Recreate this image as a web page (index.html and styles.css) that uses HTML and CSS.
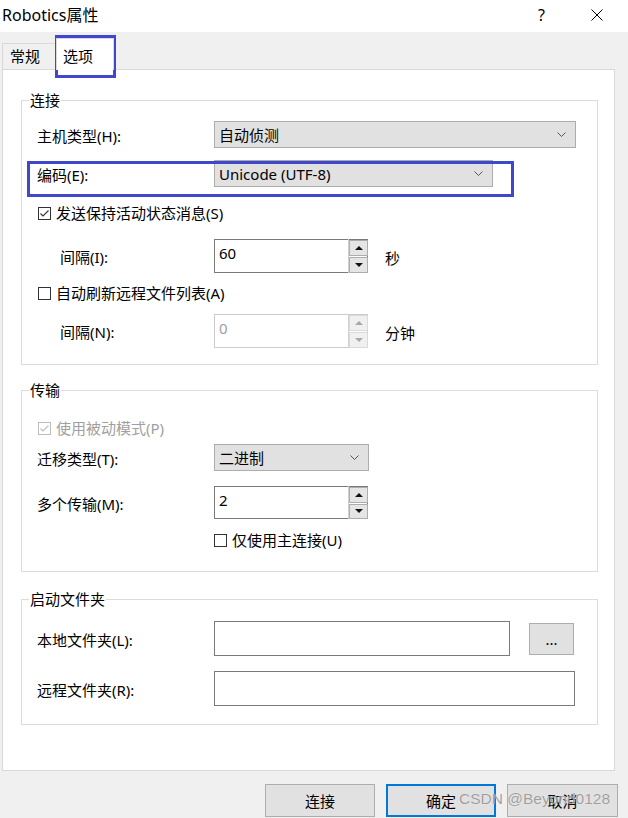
FILE: index.html
```html
<!DOCTYPE html>
<html lang="zh-CN">
<head>
<meta charset="utf-8">
<title>Robotics属性</title>
<link rel="stylesheet" href="styles.css">
</head>
<body>
<div class="window">
  <header class="titlebar">
    <span class="title">Robotics属性</span>
    <span class="help">?</span>
    <svg class="close" width="12" height="12" viewBox="0 0 12 12"><path d="M0.5 0.5L11.5 11.5M11.5 0.5L0.5 11.5" stroke="#000" stroke-width="1" fill="none"/></svg>
  </header>

  <nav class="tabs">
    <div class="tab">常规</div>
    <div class="tab active">选项</div>
  </nav>

  <main class="panel">
    <fieldset class="group group-conn">
      <legend>连接</legend>
      <div class="group-body">
        <div class="row row-combo m11">
          <span class="lbl">主机类型(H):</span>
          <div class="combo w-host"><span>自动侦测</span><svg class="chev" width="9" height="5" viewBox="0 0 9 5"><polyline points="0.5,0.5 4.5,4.5 8.5,0.5" fill="none" stroke="#555" stroke-width="1"/></svg></div>
        </div>
        <div class="row row-combo m12">
          <span class="lbl">编码(E):</span>
          <div class="combo w-enc"><span>Unicode (UTF-8)</span><svg class="chev" width="9" height="5" viewBox="0 0 9 5"><polyline points="0.5,0.5 4.5,4.5 8.5,0.5" fill="none" stroke="#555" stroke-width="1"/></svg></div>
        </div>
        <div class="row row-check m16">
          <span class="cb"><svg width="11" height="11" viewBox="0 0 11 11"><polyline points="1.5,5.5 4,8 9.5,2.5" fill="none" stroke="#333" stroke-width="1.1"/></svg></span>
          <span class="cb-text">发送保持活动状态消息(S)</span>
        </div>
        <div class="row row-spin m16">
          <span class="lbl sub">间隔(I):</span>
          <div class="spin">
            <span class="spin-val">60</span>
            <div class="spin-btns">
              <span class="sbtn"><i class="arr up"></i></span>
              <span class="sbtn"><i class="arr down"></i></span>
            </div>
          </div>
          <span class="unit">秒</span>
        </div>
        <div class="row row-check m10">
          <span class="cb"></span>
          <span class="cb-text">自动刷新远程文件列表(A)</span>
        </div>
        <div class="row row-spin m11">
          <span class="lbl sub">间隔(N):</span>
          <div class="spin disabled">
            <span class="spin-val">0</span>
            <div class="spin-btns">
              <span class="sbtn"><i class="arr up"></i></span>
              <span class="sbtn"><i class="arr down"></i></span>
            </div>
          </div>
          <span class="unit">分钟</span>
        </div>
      </div>
    </fieldset>

    <fieldset class="group group-trans">
      <legend>传输</legend>
      <div class="group-body">
        <div class="row row-check m18 disabled">
          <span class="cb"><svg width="11" height="11" viewBox="0 0 11 11"><polyline points="1.5,5.5 4,8 9.5,2.5" fill="none" stroke="#bdbdbd" stroke-width="1.1"/></svg></span>
          <span class="cb-text">使用被动模式(P)</span>
        </div>
        <div class="row row-combo m6">
          <span class="lbl">迁移类型(T):</span>
          <div class="combo w-type"><span>二进制</span><svg class="chev" width="9" height="5" viewBox="0 0 9 5"><polyline points="0.5,0.5 4.5,4.5 8.5,0.5" fill="none" stroke="#555" stroke-width="1"/></svg></div>
        </div>
        <div class="row row-spin short m15">
          <span class="lbl">多个传输(M):</span>
          <div class="spin">
            <span class="spin-val">2</span>
            <div class="spin-btns">
              <span class="sbtn"><i class="arr up"></i></span>
              <span class="sbtn"><i class="arr down"></i></span>
            </div>
          </div>
        </div>
        <div class="row row-check m11 indent">
          <span class="cb"></span>
          <span class="cb-text">仅使用主连接(U)</span>
        </div>
      </div>
    </fieldset>

    <fieldset class="group group-dirs">
      <legend>启动文件夹</legend>
      <div class="group-body">
        <div class="row row-input m12">
          <span class="lbl">本地文件夹(L):</span>
          <div class="textbox w-local"></div>
          <button class="browse">...</button>
        </div>
        <div class="row row-input m15">
          <span class="lbl">远程文件夹(R):</span>
          <div class="textbox w-remote"></div>
        </div>
      </div>
    </fieldset>
  </main>

  <footer class="buttons">
    <button class="btn">连接</button>
    <button class="btn default">确定</button>
    <button class="btn wide">取消</button>
  </footer>

  <div class="mark mark-tab"></div>
  <div class="mark mark-enc"></div>
  <span class="watermark">CSDN @Beyond0128</span>
</div>
</body>
</html>
```

FILE: styles.css
```css
* { box-sizing: border-box; }

html, body {
  margin: 0;
  padding: 0;
}

body {
  width: 628px;
  height: 818px;
  overflow: hidden;
  background: #f0f0f0;
  color: #000;
  font-family: "Noto Sans", "Noto Sans CJK SC", sans-serif;
  font-size: 15px;
  line-height: 20px;
}

.window {
  position: relative;
  width: 628px;
  height: 818px;
}

/* title bar */
.titlebar {
  height: 32px;
  background: #fff;
  display: flex;
  align-items: center;
}
.title {
  font-size: 16px;
  margin-left: 2px;
  margin-top: -3px;
}
.help {
  margin-left: auto;
  font-size: 16px;
  margin-right: 46px;
  margin-top: -3px;
}
.close {
  margin-right: 25px;
  margin-top: -3px;
}

/* tabs */
.tabs {
  height: 37px;
  display: flex;
  align-items: flex-end;
  padding-left: 2px;
}
.tab {
  height: 26px;
  width: 54px;
  border: 1px solid #d9d9d9;
  border-bottom: none;
  padding-left: 7px;
  line-height: 24px;
  background: #f0f0f0;
}
.tab.active {
  height: 32px;
  width: 58px;
  background: #fff;
  margin-bottom: -1px;
  position: relative;
  z-index: 1;
  padding-left: 6px;
  padding-top: 7px;
  line-height: 20px;
}

/* panel */
.panel {
  margin-left: 2px;
  width: 613px;
  height: 702px;
  border: 1px solid #d9d9d9;
  background: #fff;
  padding: 20px 0 0 18px;
}

.group {
  width: 577px;
  margin: 0;
  padding: 0;
  border: 1px solid #dcdcdc;
  min-width: 0;
}
.group legend {
  margin-left: 7px;
  padding: 0 1px;
  line-height: 20px;
  height: 20px;
}
.group-trans { margin-top: 15px; }
.group-dirs { margin-top: 17px; }

.group-body { padding-left: 15px; }
.group-conn .group-body { padding-bottom: 16px; }
.group-trans .group-body { padding-bottom: 21px; }
.group-dirs .group-body { padding-bottom: 18px; }

.m6 { margin-top: 6px; }
.m10 { margin-top: 10px; }
.m11 { margin-top: 11px; }
.m12 { margin-top: 12px; }
.m15 { margin-top: 15px; }
.m16 { margin-top: 16px; }
.m18 { margin-top: 18px; }

.row {
  display: flex;
  align-items: center;
}
.row-combo { height: 27px; }
.row-spin { height: 34px; }
.row-spin.short { height: 33px; }
.row-check { height: 20px; }
.row-input { height: 35px; }

.lbl {
  width: 177px;
  flex: none;
  padding-top: 2px;
}
.lbl.sub { padding-left: 23px; }

/* combo box */
.combo {
  height: 27px;
  background: #e1e1e1;
  border: 1px solid #adadad;
  display: flex;
  align-items: center;
  padding-left: 4px;
  padding-right: 9px;
}
.combo span { flex: 1; padding-top: 1px; }
.w-host { width: 362px; }
.w-enc { width: 279px; }
.w-type { width: 155px; }

/* checkbox */
.cb {
  width: 13px;
  height: 13px;
  border: 1px solid #333;
  margin-left: 1px;
  flex: none;
  display: flex;
  align-items: center;
  justify-content: center;
  background: #fff;
}
.cb-text { margin-left: 5px; }
.row-check.disabled .cb { border-color: #bcbcbc; }
.row-check.disabled .cb-text { color: #a0a0a0; }
.row-check.indent { padding-left: 176px; }

/* spinner */
.spin {
  width: 154px;
  height: 100%;
  border: 1px solid #7a7a7a;
  display: flex;
  background: #fff;
}
.spin-val {
  flex: 1;
  padding: 3px 0 0 4px;
}
.spin-btns {
  width: 20px;
  display: flex;
  flex-direction: column;
  gap: 1px;
  padding: 1px 0 0;
  margin-right: -1px;
  margin-top: -1px;
  margin-bottom: -1px;
  border-left: 1px solid #d0d0d0;
}
.sbtn {
  flex: 1;
  background: #e5e5e5;
  border: 1px solid #adadad;
  display: flex;
  align-items: center;
  justify-content: center;
}
.arr {
  width: 0;
  height: 0;
  border-left: 4px solid transparent;
  border-right: 4px solid transparent;
}
.arr.up { border-bottom: 4px solid #111; }
.arr.down { border-top: 4px solid #111; }

.spin.disabled { border-color: #cccccc; }
.spin.disabled .spin-val { color: #a0a0a0; }
.spin.disabled .sbtn { background: #f0f0f0; border-color: #d9d9d9; }
.spin.disabled .arr.up { border-bottom-color: #a8a8a8; }
.spin.disabled .arr.down { border-top-color: #a8a8a8; }

.unit { margin-left: 17px; padding-top: 4px; }

/* text inputs */
.textbox {
  height: 35px;
  border: 1px solid #7a7a7a;
  background: #fff;
}
.w-local { width: 296px; }
.w-remote { width: 361px; }

.browse {
  margin-left: 19px;
  width: 45px;
  height: 32px;
  background: #e1e1e1;
  border: 1px solid #adadad;
  font: inherit;
  padding: 0;
  line-height: 20px;
}

/* bottom buttons */
.buttons {
  display: flex;
  justify-content: flex-end;
  gap: 11px;
  padding: 13px 10px 0 0;
}
.btn {
  width: 110px;
  height: 33px;
  background: #e1e1e1;
  border: 1px solid #adadad;
  font: inherit;
  padding: 0;
  color: #000;
}
.btn.wide { width: 111px; }
.btn.default { border: 2px solid #0078d7; }

/* annotation overlays */
.mark {
  position: absolute;
  border: 3px solid #3f48cc;
  pointer-events: none;
}
.mark-tab { left: 55px; top: 35px; width: 61px; height: 43px; }
.mark-enc { left: 27px; top: 161px; width: 487px; height: 36px; }

.watermark {
  position: absolute;
  left: 459px;
  top: 789px;
  font-family: "Liberation Sans", sans-serif;
  font-size: 15.5px;
  line-height: 20px;
  color: rgba(130, 130, 130, 0.75);
  text-shadow: 0 0 1px rgba(255, 255, 255, 0.8);
  pointer-events: none;
}
```
